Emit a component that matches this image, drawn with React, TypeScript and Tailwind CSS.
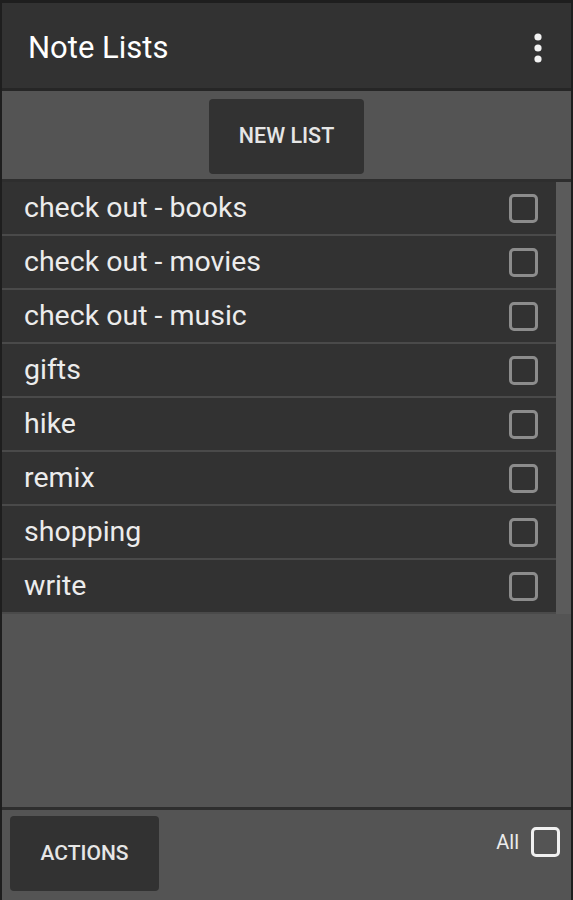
const lists = [
  'check out - books',
  'check out - movies',
  'check out - music',
  'gifts',
  'hike',
  'remix',
  'shopping',
  'write',
];

function Kebab() {
  return (
    <svg width="10" height="30" viewBox="0 0 10 30" fill="#f2f2f2">
      <circle cx="5" cy="4" r="3.6" />
      <circle cx="5" cy="15" r="3.6" />
      <circle cx="5" cy="26" r="3.6" />
    </svg>
  );
}

export default function App() {
  return (
    <div
      className="flex h-[900px] w-[573px] flex-col bg-[#1e1e1e] pl-[2px] pr-[2px] pt-[3px] text-[#ececec]"
      style={{ fontFamily: 'Roboto, "Noto Sans", sans-serif' }}
    >
      <header className="flex h-[85px] shrink-0 items-center justify-between bg-[#323232] pl-[26px] pr-[28px] pt-[4px]">
        <h1 className="text-[31px] leading-none text-white">Note Lists</h1>
        <Kebab />
      </header>

      <div className="flex h-[91px] shrink-0 justify-center border-t-[3px] border-[#262626] bg-[#545454] pt-[8px]">
        <button className="h-[75px] w-[155px] rounded-[4px] bg-[#323232] text-[21.5px] font-medium text-[#e6e6e6]">
          NEW LIST
        </button>
      </div>

      <div className="flex flex-1 flex-col border-t-[3px] border-[#2e2e2e] bg-[#545454]">
        <div className="flex">
          <ul className="flex flex-1 flex-col">
            {lists.map((name) => (
              <li
                key={name}
                className="flex h-[54px] items-center justify-between border-b-[2px] border-[#4a4a4a] bg-[#323232] pl-[22px] pr-[18px] shadow-[1px_0_0_#2a2a2a]"
              >
                <span className="text-[28.5px] leading-none">{name}</span>
                <span className="h-[29px] w-[29px] rounded-[5px] border-[3px] border-[#8c8c8c]" />
              </li>
            ))}
          </ul>
          <div className="w-[15px] bg-[#5b5b5b]" />
        </div>
      </div>

      <footer className="flex h-[93px] shrink-0 items-start justify-between border-t-[3px] border-[#2e2e2e] bg-[#545454] pl-[8px] pr-[11px] pt-[6px]">
        <button className="h-[75px] w-[149px] rounded-[4px] bg-[#323232] text-[21px] font-medium text-[#e6e6e6]">
          ACTIONS
        </button>
        <label className="mt-[11px] flex items-center gap-[12px]">
          <span className="text-[20px] text-[#ececec]">All</span>
          <span className="h-[30px] w-[29px] rounded-[5px] border-[3px] border-[#f0f0f0]" />
        </label>
      </footer>
    </div>
  );
}
